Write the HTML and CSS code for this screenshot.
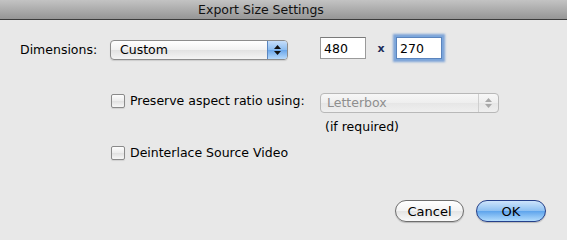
FILE: index.html
```html
<!DOCTYPE html>
<html lang="en">
<head>
  <meta charset="UTF-8" />
  <title>Export Size Settings</title>
  <link rel="stylesheet" href="styles.css">
</head>
<body>

  <div class="titlebar">Export Size Settings</div>

  <div class="dialog">
    <div class="form">
      <label class="field-label">Dimensions:</label>
      <div class="popup">
        <span class="popup-value">Custom</span>
        <span class="popup-arrows">
          <svg width="7" height="10" viewBox="0 0 7 10"><path d="M3.5 0 L7 4 L0 4 Z M0 6 L7 6 L3.5 10 Z" fill="#111"/></svg>
        </span>
      </div>
      <div class="size-fields">
        <input class="text-field" type="text" value="480" />
        <span class="times">x</span>
        <input class="text-field focused" type="text" value="270" />
      </div>

      <div class="check-row aspect">
        <span class="checkbox"></span>
        <span>Preserve aspect ratio using:</span>
      </div>
      <div class="aspect-options">
        <div class="popup disabled">
          <span class="popup-value">Letterbox</span>
          <span class="popup-arrows">
            <svg width="7" height="10" viewBox="0 0 7 10"><path d="M3.5 0 L7 4 L0 4 Z M0 6 L7 6 L3.5 10 Z" fill="#a8a8a8"/></svg>
          </span>
        </div>
        <div class="hint">(if required)</div>
      </div>

      <div class="check-row deinterlace">
        <span class="checkbox"></span>
        <span>Deinterlace Source Video</span>
      </div>
    </div>

    <div class="buttons">
      <button class="btn">Cancel</button>
      <button class="btn default">OK</button>
    </div>
  </div>

</body>
</html>
```

FILE: styles.css
```css
body {
  margin: 0;
  background: #e8e8e8;
  font-family: "DejaVu Sans", sans-serif;
  font-size: 12.5px;
  color: #000;
  height: 240px;
  overflow: hidden;
}

.titlebar {
  height: 19px;
  line-height: 19px;
  padding-right: 45px;
  text-align: center;
  font-size: 12.5px;
  color: #111;
  background: linear-gradient(#c3c3c3, #969696);
  border-bottom: 1px solid #3c3c3c;
}

.dialog {
  padding: 17px 21px 0 20px;
}

.form {
  display: grid;
  grid-template-columns: 90px 210px auto;
  align-items: start;
}

.field-label {
  line-height: 23px;
  padding-top: 1px;
}

/* Aqua style popup button */
.popup {
  display: flex;
  width: 176px;
  height: 18px;
  margin-top: 3px;
  border: 1px solid #8c8c8c;
  border-radius: 4px;
  background: linear-gradient(#ffffff, #f1f1f1 50%, #e2e2e2 51%, #f4f4f4);
  overflow: hidden;
  box-shadow: 0 1px 1px rgba(0, 0, 0, 0.12);
}

.popup-value {
  flex: 1;
  padding-left: 9px;
  line-height: 18px;
  font-size: 12.5px;
}

.popup-arrows {
  width: 19px;
  display: flex;
  align-items: center;
  justify-content: center;
  border-left: 1px solid #5a86c0;
  background: linear-gradient(#c6defa, #8bbcf0 50%, #6aa6ea 51%, #b7dafc);
}

.popup.disabled {
  width: 177px;
  margin-top: 0;
  border-color: #b8b8b8;
  background: linear-gradient(#f7f7f7, #eeeeee 50%, #e6e6e6 51%, #efefef);
  box-shadow: none;
}

.popup.disabled .popup-value {
  color: #8e8e8e;
  padding-left: 6px;
}

.popup.disabled .popup-arrows {
  border-left: 1px solid #cfcfcf;
  background: none;
}

.size-fields {
  display: flex;
  align-items: center;
}

.text-field {
  width: 41px;
  height: 20px;
  padding: 0 0 0 3px;
  margin: 0;
  border: 1px solid #9a9a9a;
  border-top-color: #7a7a7a;
  background: #fff;
  font-family: "DejaVu Sans", sans-serif;
  font-size: 12.5px;
  color: #000;
  outline: none;
}

.text-field.focused {
  box-shadow: 0 0 0 1px #7aa6dc, 0 0 2px 3px rgba(90, 140, 210, 0.75);
  border-color: #5b84bd;
}

.times {
  width: 30px;
  text-align: center;
  font-weight: bold;
  font-size: 11px;
  color: #1c2c5a;
}

.check-row {
  grid-column: 2;
  display: flex;
  align-items: center;
  gap: 5px;
  padding-left: 1px;
}

.check-row.aspect {
  margin-top: 32px;
}

.check-row.deinterlace {
  margin-top: 11px;
}

.checkbox {
  width: 12px;
  height: 12px;
  border: 1px solid #8a8a8a;
  border-radius: 2px;
  background: linear-gradient(#fdfdfd, #ececec 50%, #e0e0e0 51%, #f7f7f7);
  box-shadow: 0 1px 1px rgba(0, 0, 0, 0.1);
}

.aspect-options {
  margin-top: 32px;
}

.hint {
  margin-top: 6px;
  padding-left: 5px;
}

.buttons {
  display: flex;
  justify-content: flex-end;
  gap: 12px;
  margin-top: 40px;
}

/* Aqua pill buttons */
.btn {
  width: 69px;
  height: 22px;
  padding: 0;
  border: 1px solid #6e6e6e;
  border-radius: 11px;
  background: linear-gradient(#ffffff, #f3f3f3 50%, #e4e4e4 51%, #fafafa);
  font-family: "DejaVu Sans", sans-serif;
  font-size: 13px;
  color: #000;
  box-shadow: 0 1px 1px rgba(0, 0, 0, 0.2);
}

.btn.default {
  width: 70px;
  border-color: #25408a;
  background: linear-gradient(#cde4fb, #8cc0f2 50%, #5ea4ec 51%, #b2dcfd);
}
```
